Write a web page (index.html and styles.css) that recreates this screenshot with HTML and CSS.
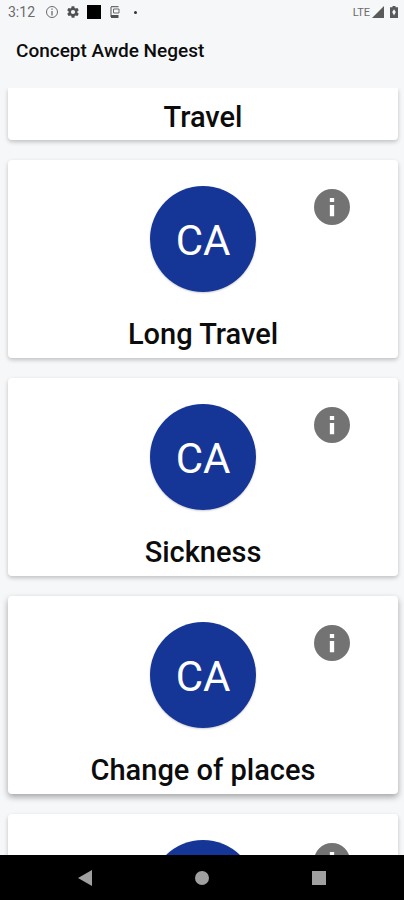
FILE: index.html
```html
<!DOCTYPE html>
<html lang="en">
<head>
<meta charset="utf-8">
<meta name="viewport" content="width=device-width, initial-scale=1">
<title>Concept Awde Negest</title>
<link rel="stylesheet" href="styles.css">
</head>
<body>
<svg class="defs" aria-hidden="true">
  <symbol id="info" viewBox="2 2 20 20">
    <path fill="currentColor" fill-rule="evenodd" d="M12 2a10 10 0 1 0 0 20 10 10 0 0 0 0-20zM10.800 7h2.400v2.200h-2.400zM10.800 10.900h2.400v6.200h-2.400z"/>
  </symbol>
</svg>
<div class="status">
  <span class="clock">3:12</span>
  <svg class="glyph" viewBox="0 0 14 14" aria-hidden="true"><circle cx="7" cy="7" r="5.500" fill="none" stroke="#6b6b6b"/><path d="M7 3.500v1.300M7 6v4.500" stroke="#6b6b6b" stroke-width="1.300"/></svg>
  <svg class="glyph" viewBox="0 0 24 24" aria-hidden="true"><path fill="#505153" fill-rule="evenodd" d="M19.400 13a7.500 7.500 0 0 0 0-2l2.100-1.600c.2-.2.300-.4.100-.7l-2-3.400c-.1-.2-.4-.3-.6-.2l-2.500 1a7.300 7.300 0 0 0-1.700-1l-.4-2.600a.5.500 0 0 0-.5-.5h-4a.5.500 0 0 0-.5.500l-.3 2.600c-.6.300-1.200.6-1.700 1l-2.500-1c-.2-.1-.5 0-.6.200l-2 3.400c-.1.200-.1.500.1.700L4.600 11a7.500 7.500 0 0 0 0 2l-2.100 1.600c-.2.200-.3.400-.1.700l2 3.400c.1.200.4.300.6.200l2.500-1c.5.400 1.100.8 1.700 1l.3 2.600c0 .3.200.5.500.5h4c.3 0 .5-.2.500-.5l.4-2.600c.6-.3 1.200-.6 1.700-1l2.500 1c.2.100.5 0 .6-.2l2-3.400c.1-.2.100-.5-.1-.7zM12 15.600a3.600 3.600 0 1 1 0-7.200 3.600 3.600 0 0 1 0 7.200z"/></svg>
  <span class="block"></span>
  <svg class="glyph" viewBox="0 0 14 14" aria-hidden="true"><path d="M3 2v10M3 1.700h7.500" fill="none" stroke="#6b6b6b" stroke-width="1.200"/><path d="M5.500 4h5.500v4H5.500z" fill="none" stroke="#6b6b6b"/><path d="M3 10h7.500v3H3z" fill="#505153"/></svg>
  <span class="dot"></span>
  <span class="network">LTE</span>
  <svg class="signal" viewBox="0 0 12 12" aria-hidden="true"><path d="M12 0v12H0z" fill="#5a5a5b"/></svg>
  <svg class="battery" viewBox="0 0 8 12" aria-hidden="true"><path d="M2.500 0h3v1.300H8V12H0V1.300h2.500z" fill="#5a5a5b"/><path d="M4 3.200L5.800 6 4 9.500 2.200 6z" fill="#f7f8fa"/></svg>
</div>
<header class="appbar"><h1>Concept Awde Negest</h1></header>
<main class="list">
  <article class="card clipped"><h2>Travel</h2></article>
  <article class="card">
    <div class="top"><span class="avatar">CA</span><button class="info" type="button" aria-label="Info"><svg aria-hidden="true"><use href="#info"/></svg></button></div>
    <h2>Long Travel</h2>
  </article>
  <article class="card">
    <div class="top"><span class="avatar">CA</span><button class="info" type="button" aria-label="Info"><svg aria-hidden="true"><use href="#info"/></svg></button></div>
    <h2>Sickness</h2>
  </article>
  <article class="card raised">
    <div class="top"><span class="avatar">CA</span><button class="info" type="button" aria-label="Info"><svg aria-hidden="true"><use href="#info"/></svg></button></div>
    <h2>Change of places</h2>
  </article>
  <article class="card">
    <div class="top"><span class="avatar"></span><button class="info" type="button" aria-label="Info"><svg aria-hidden="true"><use href="#info"/></svg></button></div>
  </article>
</main>
<nav class="navbar">
  <button type="button" aria-label="Back"><svg viewBox="0 0 16 16" aria-hidden="true"><path d="M15 0v16L1 8z"/></svg></button>
  <button type="button" aria-label="Home"><svg viewBox="0 0 16 16" aria-hidden="true"><circle cx="8" cy="8" r="7"/></svg></button>
  <button type="button" aria-label="Recent apps"><svg viewBox="0 0 16 16" aria-hidden="true"><path d="M1 1h14v14H1z"/></svg></button>
</nav>
</body>
</html>
```
FILE: styles.css
```css
* { box-sizing: border-box; }
body {
  margin: 0;
  height: 100vh;
  display: flex;
  flex-direction: column;
  overflow: hidden;
  background: #f6f7f9;
  color: #0c0c0c;
  font-family: Roboto, "Liberation Sans", sans-serif;
}
h1, h2 { margin: 0; font-weight: 500; }
button { border: 0; padding: 0; background: none; }
svg { display: block; }
.defs { position: absolute; width: 0; height: 0; }

.status {
  flex: none;
  display: flex;
  align-items: center;
  height: 24px;
  padding: 0 6px 0 8px;
  color: #6b6b6b;
}
.clock { font-size: 14px; margin-right: 10px; }
.glyph { width: 14px; height: 14px; margin-right: 7px; }
.block { width: 14px; height: 14px; margin-right: 7px; background: #000; }
.dot { width: 3px; height: 3px; margin-left: 5px; border-radius: 50%; background: #333; }
.network { margin-left: auto; font-size: 11px; }
.signal { width: 12px; height: 12px; margin: 0 6px 0 2px; }
.battery { width: 8px; height: 12px; }

.appbar { flex: none; height: 64px; padding: 15px 16px; }
.appbar h1 { font-size: 19px; line-height: 24px; }

.list {
  flex: 1;
  min-height: 0;
  overflow: hidden;
  display: flex;
  flex-direction: column;
  gap: 20px;
  padding: 0 6px 0 8px;
}
.card {
  flex: none;
  height: 198px;
  padding-top: 26px;
  border-radius: 4px;
  background: #fff;
  box-shadow: 0 2px 4px rgba(0, 0, 0, 0.22);
  text-align: center;
}
.card h2 { font-size: 29px; line-height: 36px; margin-top: 24px; }
.clipped { height: 52px; padding-top: 11px; border-radius: 0 0 4px 4px; }
.clipped h2 { margin-top: 0; }
.raised { box-shadow: 0 3px 6px rgba(0, 0, 0, 0.34); }
.top { display: grid; grid-template-columns: 1fr auto 1fr; }
.avatar {
  grid-column: 2;
  display: flex;
  align-items: center;
  justify-content: center;
  width: 106px;
  height: 106px;
  padding-top: 2px;
  border-radius: 50%;
  background: #163697;
  color: #fff;
  font-size: 42px;
  box-shadow: 0 1px 2px rgba(0, 0, 0, 0.2);
}
.info { justify-self: end; align-self: start; margin: 3px 48px 0 0; color: #737373; }
.info svg { width: 36px; height: 36px; }

.navbar {
  flex: none;
  display: flex;
  justify-content: center;
  gap: 101px;
  height: 45px;
  background: #000;
}
.navbar svg { width: 16px; height: 16px; fill: #a0a0a0; }
```
